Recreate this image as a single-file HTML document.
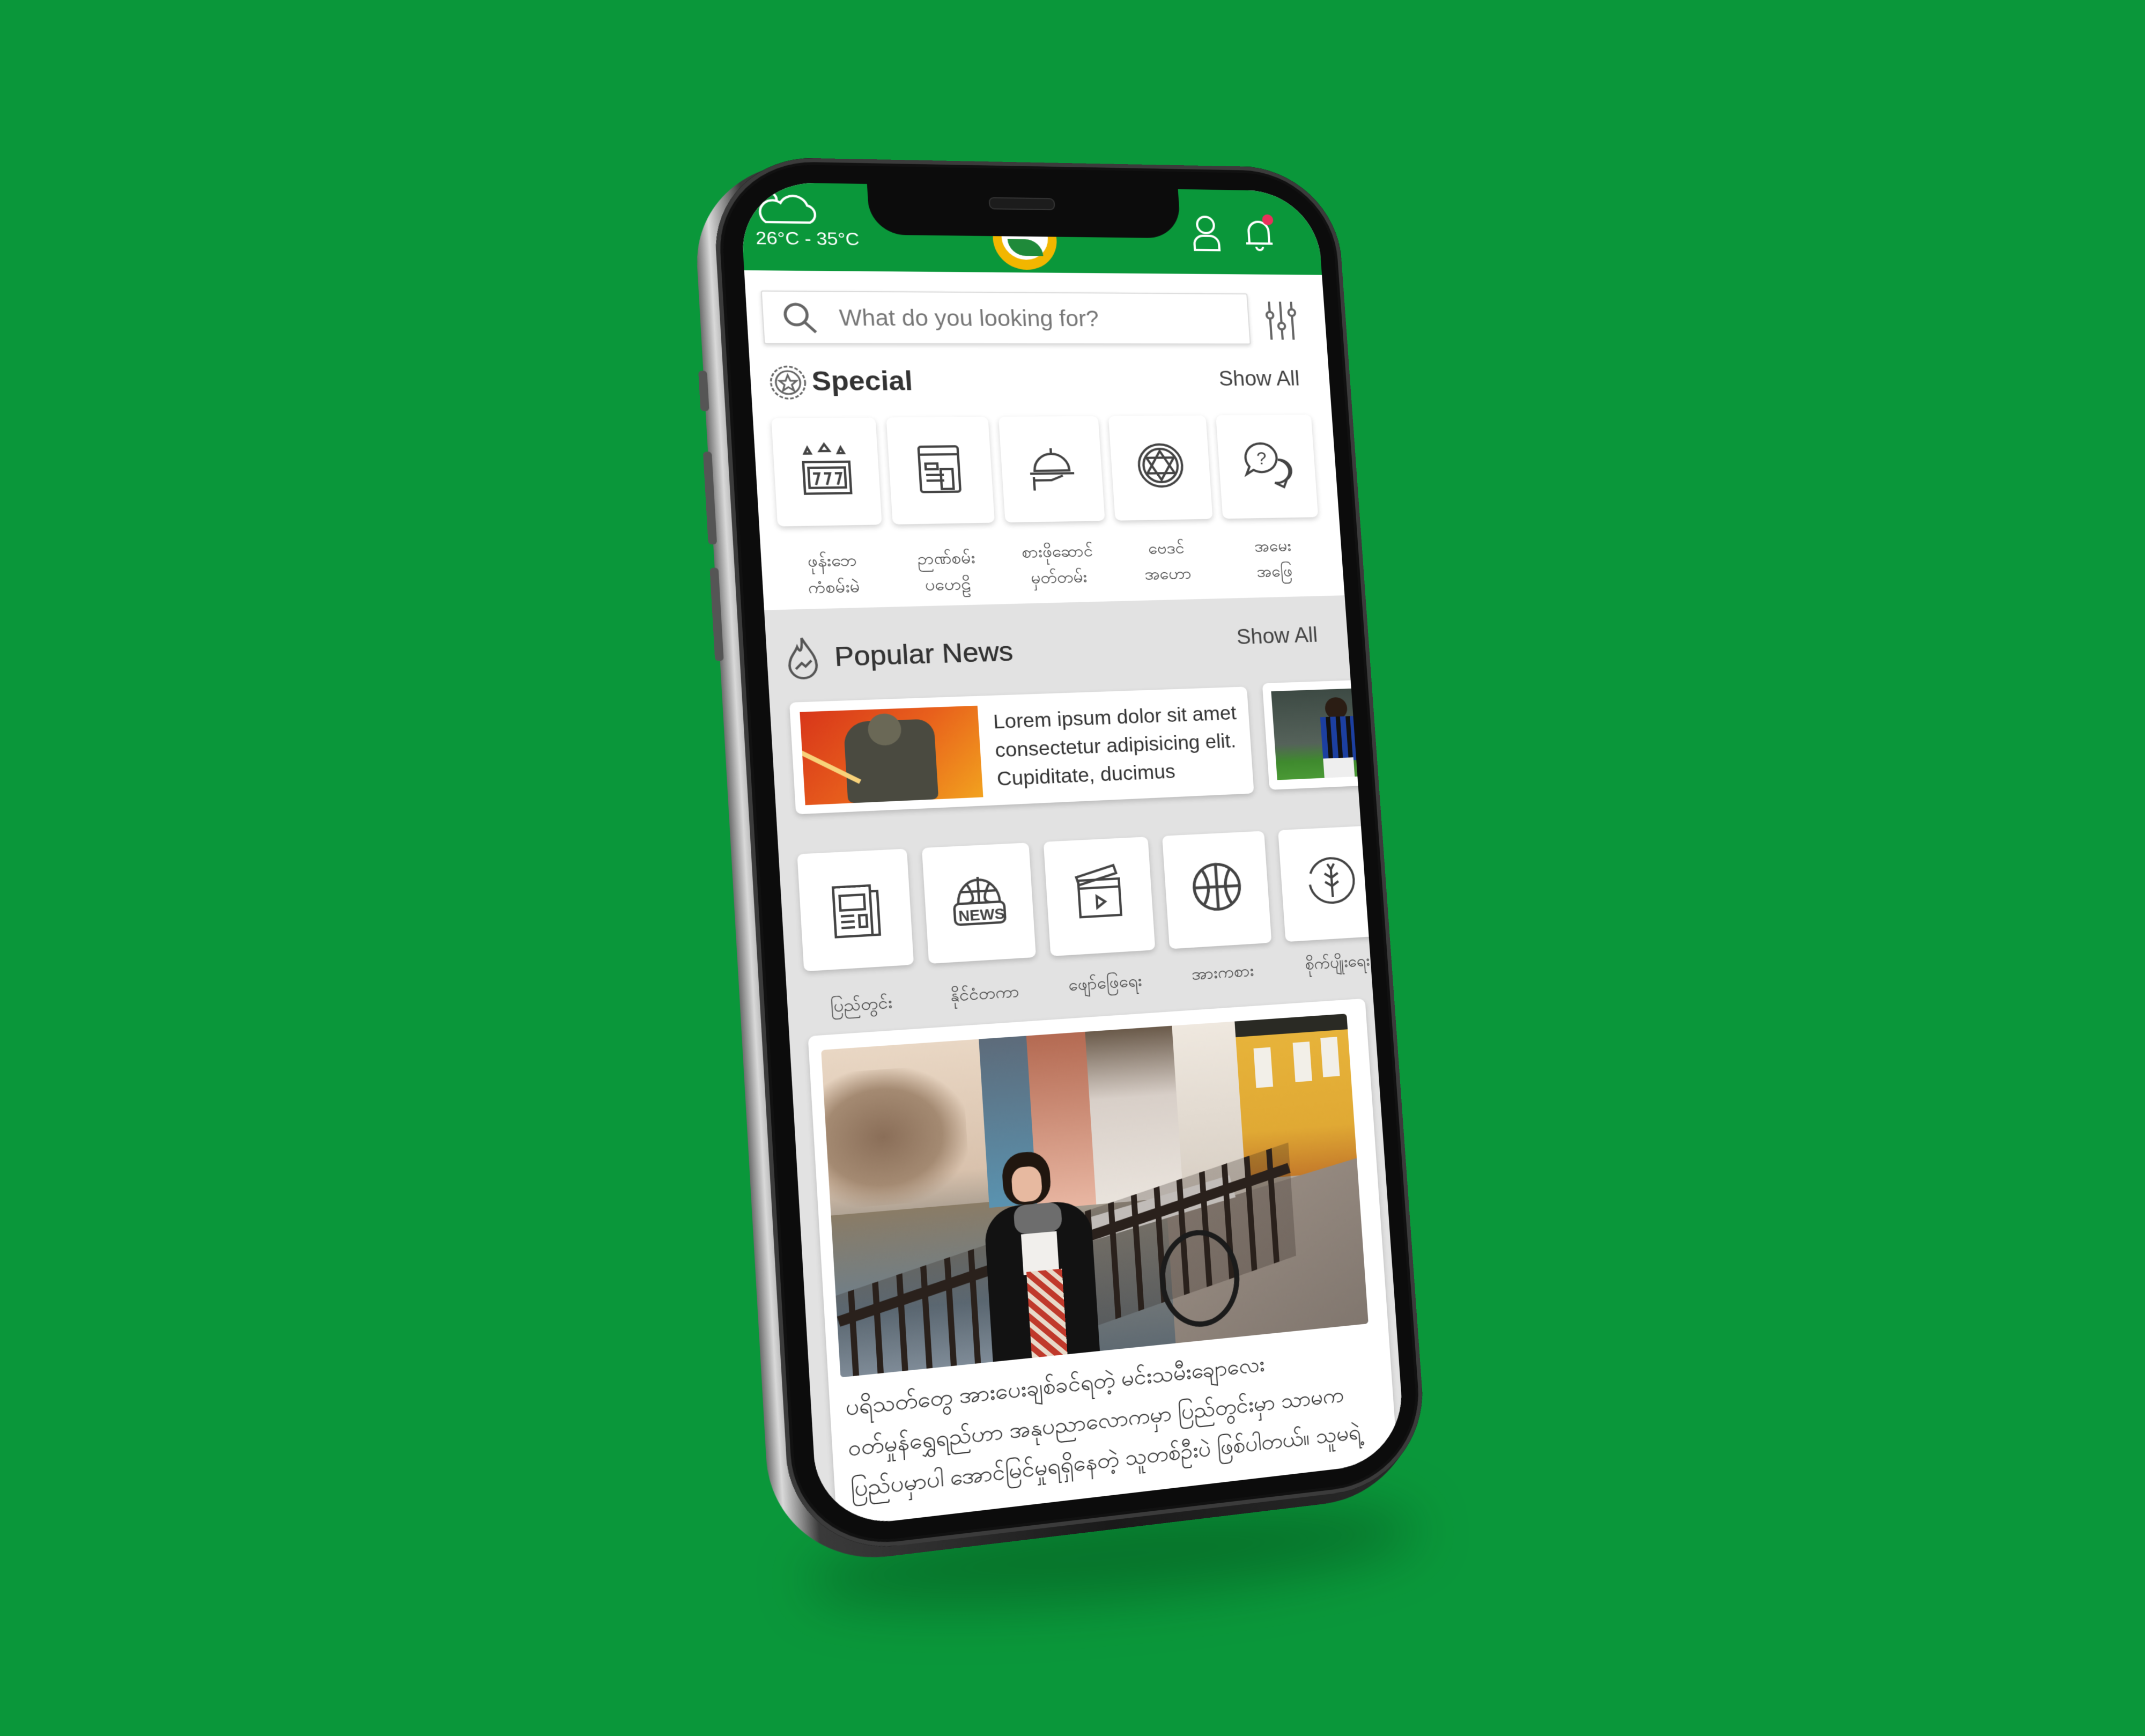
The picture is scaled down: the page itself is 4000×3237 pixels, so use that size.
<!DOCTYPE html>
<html><head><meta charset="utf-8">
<style>
html,body{margin:0;padding:0}
body{width:4000px;height:3237px;background:#0a973a;position:relative;overflow:hidden;font-family:"Liberation Sans",sans-serif}
#shadow{position:absolute;left:1500px;top:2820px;width:1150px;height:160px;border-radius:50%;background:rgba(0,50,15,.35);filter:blur(50px);transform:rotate(-5deg)}
#phone{position:absolute;left:0;top:0;width:1000px;height:2300px;transform-origin:0 0;
transform:matrix3d(1.22372,0.03949,0,0.000060196, 0.046117,1.058539,0,-0.000011946, 0,0,1,0, 1378,339,0,1)}
.side{position:absolute;left:-76px;top:-34px;width:1108px;height:2392px;border-radius:185px;background:linear-gradient(90deg,#6d6d6d 0,#d9d9d9 2%,#9a9a9a 4%,#3a3a3a 7%,#1a1a1a 50%,#2a2a2a 100%)}
.btn{position:absolute;left:-84px;width:14px;background:#555;border-radius:6px}
.body{position:absolute;left:-44px;top:-44px;width:1082px;height:2386px;border-radius:170px;background:#0c0c0c;box-shadow:inset 0 0 0 7px #3b3b3b,inset 0 0 0 12px #111}
.screen{position:absolute;left:0;top:0;width:1000px;height:2300px;border-radius:125px;overflow:hidden;background:#fff}
.hdr{position:absolute;left:0;top:0;width:1000px;height:155px;background:#0a973a}
.notch{position:absolute;left:212px;top:-10px;width:538px;height:100px;background:#0c0c0c;border-radius:0 0 60px 60px}
.spk{position:absolute;left:205px;top:30px;width:110px;height:18px;border-radius:9px;background:#1c1c1c;border:2px solid #333}
.abs{position:absolute}
.t{color:#fff;font-size:32px}
.search{position:absolute;left:25px;top:190px;width:833px;height:90px;border:2px solid #ddd;box-shadow:0 3px 6px rgba(0,0,0,.15);background:#fff;border-radius:4px}
.search span{position:absolute;left:125px;top:24px;font-size:40px;color:#777}
.h{font-size:48px;font-weight:bold;color:#333}
.sa{font-size:38px;color:#444}
.card{position:absolute;background:#fff;border-radius:10px;box-shadow:0 4px 10px rgba(0,0,0,.18)}
.lbl{position:absolute;font-size:29px;color:#444;text-align:center;line-height:46px;font-family:"Liberation Sans",sans-serif}
.grey{position:absolute;left:0;top:745px;width:1000px;height:1600px;background:#e2e2e2}
.ic{position:absolute;left:0;top:0}
</style></head><body>
<div id="shadow"></div>
<div id="phone">
  <div class="side"></div>
  <div class="btn" style="top:330px;height:70px"></div>
  <div class="btn" style="top:470px;height:160px"></div>
  <div class="btn" style="top:670px;height:160px"></div>
  <div class="body"></div>
  <div class="screen">
    <div class="hdr"></div>
    <div class="abs" style="left:420px;top:40px;width:110px;height:110px;border-radius:50%;background:#f2b600"></div>
    <div class="abs" style="left:435px;top:52px;width:80px;height:80px;border-radius:50%;background:#fff"></div>
    <div class="abs" style="left:445px;top:95px;width:60px;height:30px;border-radius:0 30px 0 30px;background:#1f8a3a"></div>
    <div class="notch"><div class="spk"></div></div>
    <svg class="ic" style="left:18px;top:8px" width="120" height="70" viewBox="0 0 120 70" fill="none" stroke="#fff" stroke-width="4">
      <circle cx="30" cy="22" r="12"/><path d="M22 62 H95 A16 16 0 0 0 92 32 A24 24 0 0 0 48 28 A16 16 0 0 0 22 62 Z" fill="#0a973a"/>
    </svg>
    <div class="abs t" style="left:22px;top:80px">26°C - 35°C</div>
    <svg class="ic" style="left:768px;top:45px" width="55" height="70" viewBox="0 0 55 70" fill="none" stroke="#fff" stroke-width="4">
      <circle cx="27" cy="20" r="15"/><path d="M5 66 V56 A16 16 0 0 1 21 40 H33 A16 16 0 0 1 49 56 V66 Z"/>
    </svg>
    <svg class="ic" style="left:858px;top:40px" width="70" height="80" viewBox="0 0 70 80" fill="none" stroke="#fff" stroke-width="4">
      <path d="M14 58 V36 A18 18 0 0 1 50 36 V58 Z M8 58 H56 M26 64 A6 6 0 0 0 38 64"/><circle cx="50" cy="14" r="10" fill="#e8305a" stroke="none"/>
    </svg>
    <div class="search">
      <svg class="ic" style="left:30px;top:16px" width="60" height="60" viewBox="0 0 60 60" fill="none" stroke="#666" stroke-width="5"><circle cx="24" cy="24" r="18"/><path d="M37 37 L55 55"/></svg>
      <span>What do you looking for?</span>
    </div>
    <svg class="ic" style="left:890px;top:200px" width="60" height="80" viewBox="0 0 60 80" fill="none" stroke="#666" stroke-width="4">
      <path d="M10 5V75M30 5V75M50 5V75"/><circle cx="10" cy="30" r="6" fill="#fff"/><circle cx="30" cy="50" r="6" fill="#fff"/><circle cx="50" cy="25" r="6" fill="#fff"/>
    </svg>
    <svg class="ic" style="left:28px;top:318px" width="66" height="66" viewBox="0 0 66 66" fill="none" stroke="#666" stroke-width="3">
      <circle cx="33" cy="33" r="28" stroke-dasharray="6 3"/><circle cx="33" cy="33" r="20"/><path d="M33 20 L37 30 L47 30 L39 37 L42 47 L33 41 L24 47 L27 37 L19 30 L29 30 Z"/>
    </svg>
    <div class="abs h" style="left:100px;top:322px">Special</div>
    <div class="abs sa" style="left:800px;top:326px">Show All</div>

    <div class="card" style="left:30px;top:413px;width:172px;height:188px"></div>
    <div class="card" style="left:220px;top:413px;width:172px;height:188px"></div>
    <div class="card" style="left:410px;top:413px;width:172px;height:188px"></div>
    <div class="card" style="left:600px;top:413px;width:172px;height:188px"></div>
    <div class="card" style="left:790px;top:413px;width:172px;height:188px"></div>
    <svg class="ic" style="left:66px;top:455px" width="100" height="100" viewBox="0 0 100 100" fill="none" stroke="#444" stroke-width="4">
      <path d="M15 20l5-10 5 10h-10zM40 16l8-12 8 12z M70 20l5-10 5 10z"/><rect x="12" y="35" width="76" height="55"/><rect x="20" y="45" width="60" height="35"/><path d="M27 55h10l-6 20M45 55h10l-6 20M63 55h10l-6 20"/>
    </svg>
    <svg class="ic" style="left:256px;top:455px" width="100" height="100" viewBox="0 0 100 100" fill="none" stroke="#444" stroke-width="4">
      <rect x="15" y="10" width="66" height="80" rx="4"/><path d="M15 24h66M25 40h20v10H25zM25 60h30M25 70h30M50 50h20v35H50z"/>
    </svg>
    <svg class="ic" style="left:446px;top:455px" width="100" height="100" viewBox="0 0 100 100" fill="none" stroke="#444" stroke-width="4">
      <path d="M20 55 A30 30 0 0 1 80 55Z M12 60h76 M50 15v10 M18 72h30l20-8 M18 66v24"/>
    </svg>
    <svg class="ic" style="left:636px;top:455px" width="100" height="100" viewBox="0 0 100 100" fill="none" stroke="#444" stroke-width="4">
      <circle cx="50" cy="48" r="38"/><circle cx="50" cy="48" r="30"/><path d="M50 22L74 62H26Z M50 74L26 34H74Z"/>
    </svg>
    <svg class="ic" style="left:826px;top:455px" width="100" height="100" viewBox="0 0 100 100" fill="none" stroke="#444" stroke-width="4">
      <path d="M40 10 A28 26 0 1 1 25 58 L12 66 L18 52 A28 26 0 0 1 40 10Z"/><path d="M70 40 A22 20 0 1 1 62 82 L78 90 L84 76 A22 20 0 0 0 70 40"/><text x="32" y="48" font-size="32" fill="#444" stroke="none" font-family="Liberation Sans">?</text>
    </svg>
    <div class="lbl" style="left:30px;top:640px;width:172px">ဖုန်းဘေ<br>ကံစမ်းမဲ</div>
    <div class="lbl" style="left:220px;top:640px;width:172px">ဉာဏ်စမ်း<br>ပဟေဠိ</div>
    <div class="lbl" style="left:410px;top:632px;width:172px">စားဖိုဆောင်<br>မှတ်တမ်း</div>
    <div class="lbl" style="left:600px;top:630px;width:172px">ဗေဒင်<br>အဟော</div>
    <div class="lbl" style="left:790px;top:630px;width:172px">အမေး<br>အဖြေ</div>

    <div class="grey"></div>
    <svg class="ic" style="left:28px;top:790px" width="60" height="80" viewBox="0 0 60 80" fill="none" stroke="#555" stroke-width="4">
      <path d="M30 5 C40 25 52 35 52 52 A22 22 0 0 1 8 52 C8 38 18 30 22 20 C26 30 30 30 30 5Z"/><path d="M18 58l10-10 6 6 10-10"/>
    </svg>
    <div class="abs h" style="left:110px;top:802px;font-weight:normal;font-size:48px;color:#333;text-shadow:0.5px 0 #333">Popular News</div>
    <div class="abs sa" style="left:800px;top:795px">Show All</div>

    <div class="card" style="left:32px;top:905px;width:780px;height:192px"></div>
    <div class="abs" style="left:48px;top:922px;width:295px;height:160px;background:linear-gradient(135deg,#d8361a 0%,#e8601c 50%,#f2a21e 100%);overflow:hidden">
      <div class="abs" style="left:70px;top:20px;width:150px;height:140px;background:#4a4a40;border-radius:40px 30px 10px 10px"></div>
      <div class="abs" style="left:110px;top:8px;width:55px;height:55px;background:#6a6856;border-radius:50%"></div>
      <div class="abs" style="left:-20px;top:90px;width:120px;height:8px;background:#f8d27a;transform:rotate(30deg)"></div>
    </div>
    <div class="abs" style="left:368px;top:927px;font-size:35px;line-height:50px;color:#333">Lorem ipsum dolor sit amet<br>consectetur adipisicing elit.<br>Cupiditate, ducimus</div>
    <div class="card" style="left:840px;top:900px;width:200px;height:192px"></div>
    <div class="abs" style="left:855px;top:915px;width:160px;height:160px;background:linear-gradient(180deg,#3d4a44 0%,#55625a 60%,#3f8a2e 80%,#4a9a35 100%)">
      <div class="abs" style="left:95px;top:15px;width:40px;height:40px;border-radius:50%;background:#2b1d14"></div>
      <div class="abs" style="left:85px;top:50px;width:60px;height:80px;background:repeating-linear-gradient(90deg,#1c3fa0 0 10px,#111 10px 18px)"></div>
      <div class="abs" style="left:85px;top:125px;width:55px;height:35px;background:#eee"></div>
    </div>

    <div class="card" style="left:30px;top:1165px;width:180px;height:200px"></div>
    <div class="card" style="left:235px;top:1165px;width:180px;height:200px"></div>
    <div class="card" style="left:440px;top:1165px;width:180px;height:200px"></div>
    <div class="card" style="left:645px;top:1165px;width:180px;height:200px"></div>
    <div class="card" style="left:850px;top:1165px;width:180px;height:200px"></div>
    <svg class="ic" style="left:70px;top:1210px" width="100" height="110" viewBox="0 0 100 110" fill="none" stroke="#444" stroke-width="4">
      <path d="M15 15h60v85H15zM75 25h12v75H75"/><path d="M25 30h40v25H25zM25 65h22M25 75h22M25 85h22M55 65h12v20H55z"/>
    </svg>
    <svg class="ic" style="left:275px;top:1205px" width="100" height="110" viewBox="0 0 100 110" fill="none" stroke="#444" stroke-width="4">
      <path d="M15 60 A35 40 0 0 1 85 60 M50 15v45 M30 25 Q50 60 30 60 M70 25 Q50 60 70 60 M18 40h64"/><rect x="8" y="60" width="84" height="36" rx="8"/><text x="14" y="90" font-size="26" font-weight="bold" fill="#444" stroke="none" font-family="Liberation Sans">NEWS</text>
    </svg>
    <svg class="ic" style="left:480px;top:1205px" width="100" height="110" viewBox="0 0 100 110" fill="none" stroke="#444" stroke-width="4">
      <path d="M15 45h70v50H15z M15 45h70v-14H15z M12 25l65-18 4 14-65 18z"/><path d="M45 60l14 10-14 10z"/>
    </svg>
    <svg class="ic" style="left:685px;top:1210px" width="100" height="100" viewBox="0 0 100 100" fill="none" stroke="#444" stroke-width="5">
      <circle cx="50" cy="50" r="40"/><path d="M50 10v80M10 50h80M25 18 Q45 50 25 82M75 18 Q55 50 75 82"/>
    </svg>
    <svg class="ic" style="left:890px;top:1210px" width="100" height="100" viewBox="0 0 100 100" fill="none" stroke="#444" stroke-width="4">
      <circle cx="50" cy="50" r="40" stroke-dasharray="120 20"/><path d="M50 30v50M50 45l-12-8M50 45l12-8M50 60l-12-8M50 60l12-8M50 30l-6-10M50 30l6-10"/>
    </svg>
    <div class="lbl" style="left:30px;top:1405px;width:180px">ပြည်တွင်း</div>
    <div class="lbl" style="left:235px;top:1400px;width:180px">နိုင်ငံတကာ</div>
    <div class="lbl" style="left:440px;top:1395px;width:180px">ဖျော်ဖြေရေး</div>
    <div class="lbl" style="left:645px;top:1390px;width:180px">အားကစား</div>
    <div class="lbl" style="left:850px;top:1385px;width:180px">စိုက်ပျိုးရေး</div>

    <div class="card" style="left:30px;top:1475px;width:955px;height:900px;border-radius:12px"></div>
    <div class="abs" style="left:50px;top:1500px;width:900px;height:552px;overflow:hidden;border-radius:6px;background:linear-gradient(180deg,#e9d7c4 0%,#d9c2ad 40%,#8e8a80 60%,#5f6a72 100%)">
      <div class="abs" style="left:0;top:40px;width:230px;height:230px;background:radial-gradient(ellipse at 40% 50%,#8a6e58 0%,#a48a72 50%,rgba(200,180,160,0) 75%)"></div>
      <div class="abs" style="left:0;top:280px;width:300px;height:280px;background:linear-gradient(180deg,#8a7c66,#6b7f8e 60%,#9fb3c5)"></div>
      <div class="abs" style="left:260px;top:0;width:90px;height:290px;background:linear-gradient(180deg,#5d6b7a,#5a93b0)"></div>
      <div class="abs" style="left:340px;top:0;width:110px;height:300px;background:linear-gradient(180deg,#b46a52,#e8b6a2)"></div>
      <div class="abs" style="left:440px;top:0;width:150px;height:300px;background:linear-gradient(180deg,#6a5a4a,#d8cfc8 40%,#e9e3dc)"></div>
      <div class="abs" style="left:590px;top:0;width:120px;height:320px;background:linear-gradient(180deg,#efe8df,#d6cdc2)"></div>
      <div class="abs" style="left:700px;top:0;width:200px;height:280px;background:linear-gradient(180deg,#2a2a24 0 10%,#e7b33a 10%,#e0a934 70%,#c47a2a 100%)"></div>
      <div class="abs" style="left:730px;top:50px;width:30px;height:70px;background:#f2efe8"></div>
      <div class="abs" style="left:800px;top:45px;width:30px;height:70px;background:#f2efe8"></div>
      <div class="abs" style="left:850px;top:40px;width:30px;height:70px;background:#f2efe8"></div>
      <div class="abs" style="left:560px;top:290px;width:380px;height:300px;background:linear-gradient(160deg,#9a8e84,#7f756d);transform:skewY(-12deg)"></div>
      <div class="abs" style="left:380px;top:300px;width:300px;height:40px;background:#f4f1ee;transform:rotate(-12deg)"></div>
      <div class="abs" style="left:-20px;top:420px;width:800px;height:200px;background:repeating-linear-gradient(90deg,#2a211c 0 10px,rgba(40,30,25,.25) 10px 40px);transform:skewY(-14deg);transform-origin:0 0"></div>
      <div class="abs" style="left:0;top:450px;width:800px;height:18px;background:#2a211c;transform:rotate(-14deg);transform-origin:0 0"></div>
      <div class="abs" style="left:540px;top:360px;width:120px;height:150px;border:9px solid #1b1b1b;border-radius:50%"></div>
      <div class="abs" style="left:285px;top:200px;width:80px;height:90px;border-radius:45% 45% 40% 40%;background:#20160f"></div>
      <div class="abs" style="left:300px;top:225px;width:50px;height:60px;border-radius:40%;background:#e7b9a0"></div>
      <div class="abs" style="left:250px;top:290px;width:180px;height:300px;border-radius:60px 60px 0 0;background:#121212"></div>
      <div class="abs" style="left:300px;top:290px;width:80px;height:50px;border-radius:20px;background:#6d6d6d"></div>
      <div class="abs" style="left:310px;top:340px;width:60px;height:70px;background:#f1efec"></div>
      <div class="abs" style="left:315px;top:405px;width:60px;height:160px;background:repeating-linear-gradient(45deg,#c0392b 0 10px,#e8d9c9 10px 18px)"></div>
    </div>
    <div class="abs" style="left:55px;top:2070px;width:920px;font-size:38px;line-height:68px;color:#333">ပရိသတ်တွေ အားပေးချစ်ခင်ရတဲ့ မင်းသမီးချောလေး<br>ဝတ်မှုန်ရွှေရည်ဟာ အနုပညာလောကမှာ ပြည်တွင်းမှာ သာမက<br>ပြည်ပမှာပါ အောင်မြင်မှုရရှိနေတဲ့ သူတစ်ဦးပဲ ဖြစ်ပါတယ်။ သူမရဲ့</div>
  </div>
</div>
</body></html>
